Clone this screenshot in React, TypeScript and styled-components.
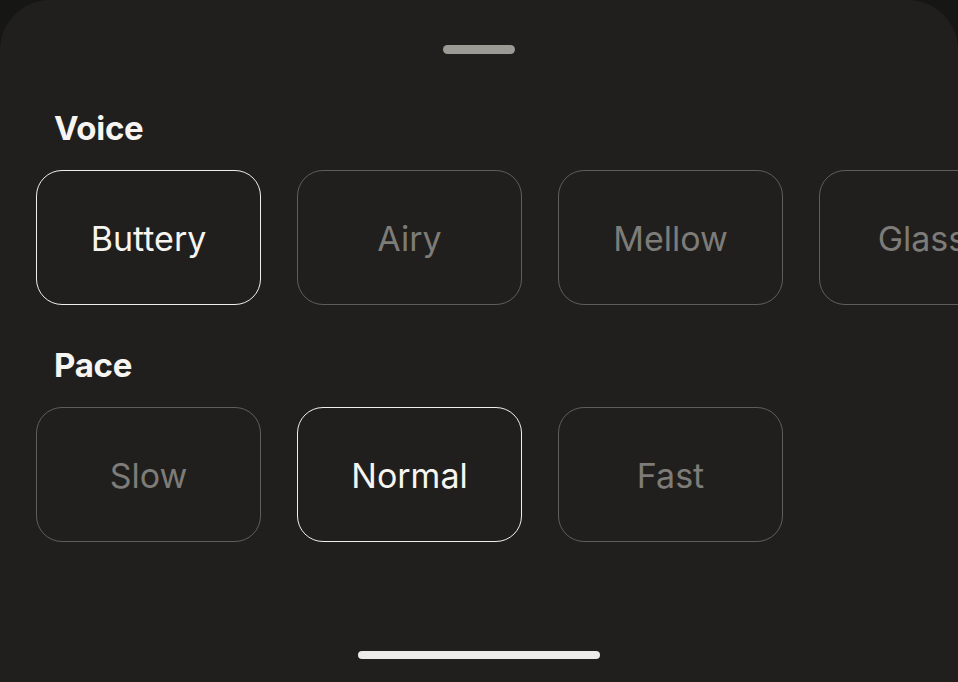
import styled, { createGlobalStyle } from "styled-components"

const GlobalStyle = createGlobalStyle`
  html, body {
    margin: 0;
    padding: 0;
    background: #161615;
    font-family: Inter, "Noto Sans", "Liberation Sans", sans-serif;
  }
  * {
    box-sizing: border-box;
  }
`

interface OptionItem {
  label: string
  selected?: boolean
}

const voices: OptionItem[] = [
  { label: "Buttery", selected: true },
  { label: "Airy" },
  { label: "Mellow" },
  { label: "Glassy" },
]

const paces: OptionItem[] = [
  { label: "Slow" },
  { label: "Normal", selected: true },
  { label: "Fast" },
]

function OptionSection(props: { title: string; items: OptionItem[] }) {
  return (
    <Section>
      <Heading>{props.title}</Heading>
      <Row>
        {props.items.map((item) => (
          <Option key={item.label} $selected={!!item.selected}>
            {item.label}
          </Option>
        ))}
      </Row>
    </Section>
  )
}

export default function App() {
  return (
    <>
      <GlobalStyle />
      <Sheet>
        <Handle />
        <OptionSection title="Voice" items={voices} />
        <OptionSection title="Pace" items={paces} />
        <HomeIndicator />
      </Sheet>
    </>
  )
}

const Sheet = styled.div`
  display: flex;
  flex-direction: column;
  width: 958px;
  height: 682px;
  padding-top: 45px;
  background: #201f1d;
  border-radius: 50px 50px 0 0;
  overflow: hidden;
`

const Handle = styled.div`
  align-self: center;
  width: 72px;
  height: 9px;
  border-radius: 4.5px;
  background: #9b9a95;
  margin-bottom: 58px;
`

const Section = styled.section`
  display: flex;
  flex-direction: column;
  margin-bottom: 44px;
`

const Heading = styled.h2`
  margin: 0 0 25px 54px;
  font-size: 33px;
  line-height: 33px;
  font-weight: 700;
  letter-spacing: -0.3px;
  color: #f6f5f1;
`

const Row = styled.div`
  display: flex;
  gap: 36px;
  padding-left: 36px;
  overflow: hidden;
`

const Option = styled.div<{ $selected: boolean }>`
  flex-shrink: 0;
  display: flex;
  align-items: center;
  justify-content: center;
  width: 225px;
  height: 135px;
  border-radius: 26px;
  border: ${(p) => (p.$selected ? "1.5px solid #efeeea" : "1px solid #5f5e5b")};
  font-size: 34px;
  font-weight: 400;
  padding-top: 2px;
  color: ${(p) => (p.$selected ? "#f6f5f1" : "#7d7c78")};
`

const HomeIndicator = styled.div`
  align-self: center;
  margin-top: auto;
  margin-bottom: 23px;
  width: 242px;
  height: 8px;
  border-radius: 4px;
  background: #ecebe8;
`
